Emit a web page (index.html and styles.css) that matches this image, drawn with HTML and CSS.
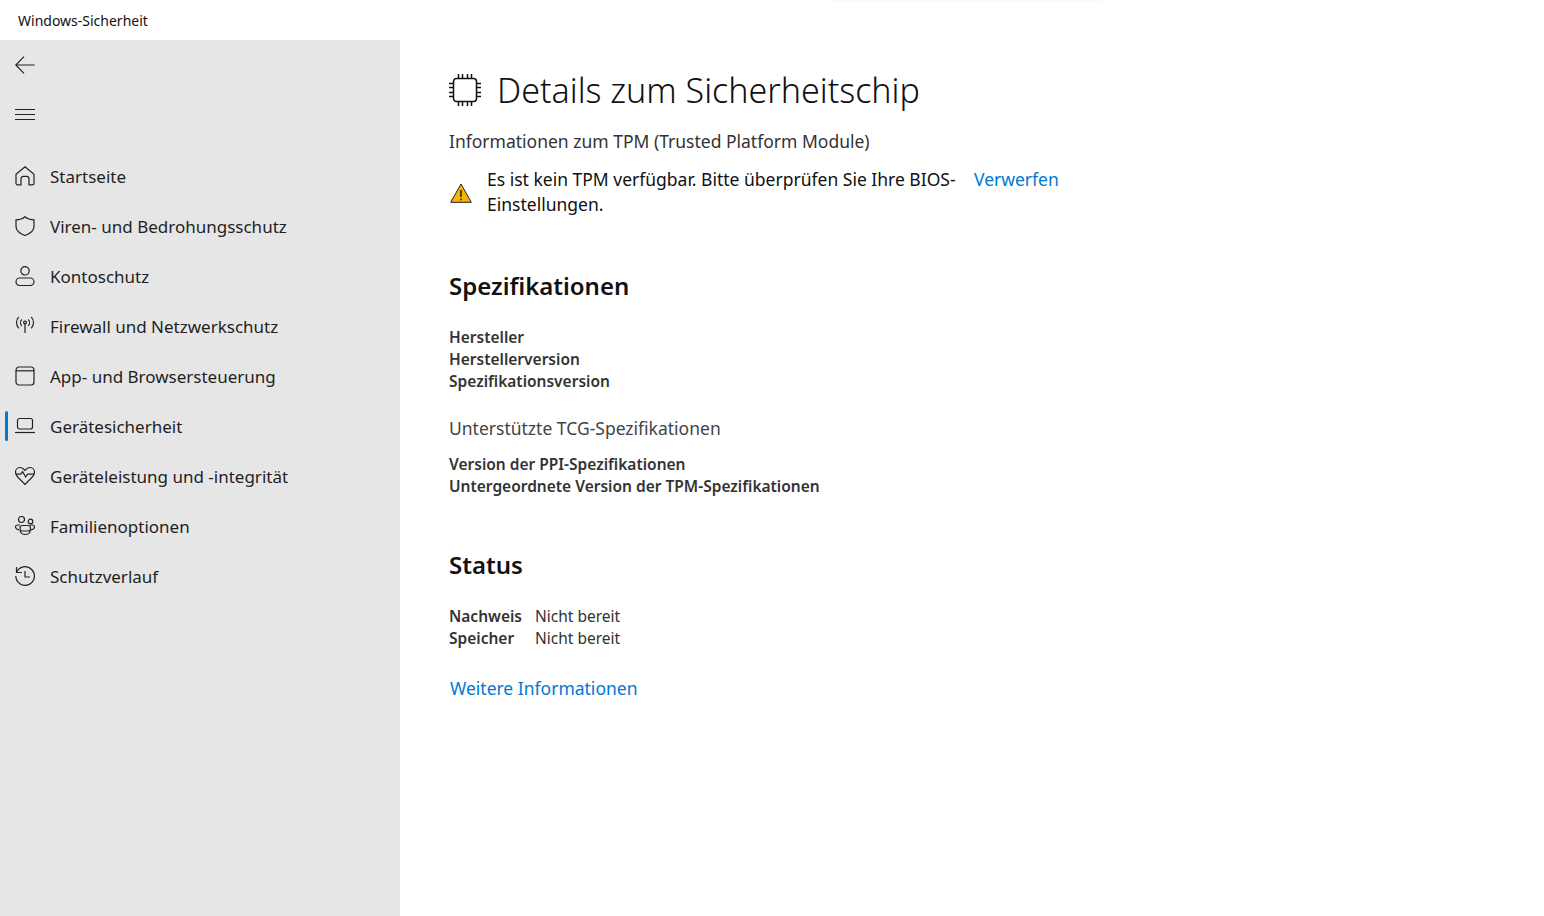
FILE: index.html
```html
<!DOCTYPE html>
<html lang="de">
<head>
<meta charset="utf-8">
<title>Windows-Sicherheit</title>
<link rel="stylesheet" href="styles.css">
</head>
<body>
<header class="titlebar"><span class="app-title">Windows-Sicherheit</span><div class="top-shadow"></div></header>
<div class="app">
  <aside class="sidebar">
    <div class="tool"><svg class="icon" viewBox="0 0 20 20"><path d="M19.5 10H.8M9 1.7.8 10 9 18.3"/></svg></div>
    <div class="tool"><svg class="icon" viewBox="0 0 20 20"><path d="M0 4.5h20M0 9.5h20M0 14.5h20"/></svg></div>
    <nav class="nav">
      <a class="nav-item"><svg class="icon" viewBox="0 0 20 20"><path d="M1 8.2 10 .8l9 7.4v9a1.6 1.6 0 0 1-1.6 1.6H14v-6a2.5 2.5 0 0 0-2.5-2.5h-3A2.5 2.5 0 0 0 6 12.800v6H2.600A1.600 1.600 0 0 1 1 17.200z"/></svg><span>Startseite</span></a>
      <a class="nav-item"><svg class="icon" viewBox="0 0 20 20"><path d="M10 .8c2.300 2 5.300 3 9 3v6.500c0 4-3 7.200-9 9.200-6-2-9-5.200-9-9.200V3.800c3.700 0 6.700-1 9-3z"/></svg><span>Viren- und Bedrohungsschutz</span></a>
      <a class="nav-item"><svg class="icon" viewBox="0 0 20 20"><circle cx="10" cy="4.800" r="4.200"/><rect x="1" y="12" width="18" height="7.500" rx="3.700"/></svg><span>Kontoschutz</span></a>
      <a class="nav-item"><svg class="icon" viewBox="0 0 20 20"><circle cx="10" cy="6.500" r="1.400"/><path d="M10 8v9M6.800 3.500a4.500 4.500 0 0 0 0 6.300M13.200 3.500a4.500 4.500 0 0 1 0 6.300M3.800 .8a8.300 8.300 0 0 0 0 11.500M16.200 .8a8.300 8.300 0 0 1 0 11.500"/></svg><span>Firewall und Netzwerkschutz</span></a>
      <a class="nav-item"><svg class="icon" viewBox="0 0 20 20"><rect x="1" y="1" width="18" height="18" rx="3"/><path d="M1 4.800h18"/></svg><span>App- und Browsersteuerung</span></a>
      <a class="nav-item active"><svg class="icon" viewBox="0 0 20 20"><rect x="2.500" y="2.500" width="15" height="10.500" rx="2"/><path d="M0 16.500h20"/></svg><span>Gerätesicherheit</span></a>
      <a class="nav-item"><svg class="icon" viewBox="0 0 20 20"><path d="M3.200 11.500C1.500 9.800.5 8.500.5 6.300.500 3.400 2.700 1.500 5 1.500c2 0 3.700 1 5 2.800 1.300-1.800 3-2.800 5-2.800 2.300 0 4.500 1.900 4.500 4.800 0 2.200-1 3.500-2.700 5.200L10 18.500z"/><path d="M.8 8.200h5l1.800-2.500 3 5.300 2-2.800h6.600"/></svg><span>Geräteleistung und -integrität</span></a>
      <a class="nav-item"><svg class="icon" viewBox="0 0 20 20"><circle cx="6.500" cy="3.500" r="3"/><circle cx="15.500" cy="5.500" r="2.300"/><path d="M5 9H2.500a2 2 0 0 0-2 2c0 1.500 1.300 2.500 3.500 2.800M15 9h2.500a2 2 0 0 1 2 2c0 1.500-1.300 2.500-3.500 2.800"/><rect x="5" y="9.500" width="10.500" height="5.500" rx="2.500"/><path d="M5 14.500c.5 2.500 2.500 4 5.200 4s4.800-1.500 5.300-4"/></svg><span>Familienoptionen</span></a>
      <a class="nav-item"><svg class="icon" viewBox="0 0 20 20"><path d="M1.500 6.500A9.300 9.300 0 1 1 .8 10M1.500 1v5.500H7M10 5v6h5"/></svg><span>Schutzverlauf</span></a>
    </nav>
  </aside>
  <main class="content">
    <div class="page-head">
      <svg class="chip" viewBox="0 0 32 32"><rect x="4.500" y="4.500" width="23" height="23" rx="3"/><path d="M9.500 0v4M13.500 0v4M18.500 0v4M22.500 0v4M9.500 28v4M13.500 28v4M18.500 28v4M22.500 28v4M0 9.500h4M0 13.500h4M0 18.500h4M0 22.500h4M28 9.500h4M28 13.500h4M28 18.500h4M28 22.500h4"/></svg>
      <h1>Details zum Sicherheitschip</h1>
    </div>
    <p class="subtitle">Informationen zum TPM (Trusted Platform Module)</p>
    <div class="alert">
      <svg class="warn" viewBox="0 0 22 20"><path class="warn-fill" d="M11 1 21.300 19.300H.7z"/><path class="warn-mark" d="M11 7v7M11 15.500v1.800"/></svg>
      <p class="alert-text">Es ist kein TPM verfügbar. Bitte überprüfen Sie Ihre BIOS-Einstellungen.</p>
      <a class="link dismiss">Verwerfen</a>
    </div>
    <h2 class="spec-head">Spezifikationen</h2>
    <ul class="labels"><li>Hersteller</li><li>Herstellerversion</li><li>Spezifikationsversion</li></ul>
    <p class="subhead">Unterstützte TCG-Spezifikationen</p>
    <ul class="labels"><li>Version der PPI-Spezifikationen</li><li>Untergeordnete Version der TPM-Spezifikationen</li></ul>
    <h2 class="status-head">Status</h2>
    <dl class="status">
      <dt>Nachweis</dt><dd>Nicht bereit</dd>
      <dt>Speicher</dt><dd>Nicht bereit</dd>
    </dl>
    <a class="link more">Weitere Informationen</a>
  </main>
</div>
</body>
</html>
```
FILE: styles.css
```css
* { box-sizing: border-box; }
html, body { margin: 0; height: 100%; overflow: hidden; }
body {
  background: #fff;
  color: #1a1a1a;
  font-family: "Noto Sans", "Open Sans", sans-serif;
  font-size: 17px;
}
.titlebar { position: relative; height: 40px; display: flex; align-items: center; padding-left: 18px; }
.app-title { font-size: 14px; color: #111; }
.top-shadow {
  position: absolute; top: 0; left: 830px; width: 272px; height: 4px;
  background: linear-gradient(#f8f8f8, #fff);
}
.app { display: flex; height: 876px; }
.sidebar { width: 400px; flex: none; background: #e6e6e6; }
.tool { height: 50px; padding-left: 15px; display: flex; align-items: center; }
.icon { width: 20px; height: 20px; flex: none; fill: none; stroke: #222; stroke-width: 1.200; }
.nav { margin-top: 11px; display: flex; flex-direction: column; }
.nav-item { position: relative; height: 50px; padding-left: 15px; display: flex; align-items: center; gap: 15px; color: #1f1f1f; }
.active::before {
  content: ""; position: absolute; left: 5px; top: 10px; width: 3px; height: 30px;
  border-radius: 2px; background: #0078d4;
}
.content { flex: 1; padding: 29px 0 0 49px; }
.page-head { display: flex; align-items: center; height: 42px; gap: 16px; }
.chip { width: 32px; height: 32px; flex: none; fill: none; stroke: #111; stroke-width: 1.500; }
h1 { margin: 0; font-size: 34px; font-weight: 300; color: #111; }
.subtitle { margin: 18px 0 0; font-size: 17.500px; line-height: 24px; color: #333; }
.alert { margin-top: 14px; display: flex; align-items: flex-start; }
.warn { width: 22px; height: 20px; margin: 16px 15px 0 1px; flex: none; }
.warn-fill { fill: #f7b500; stroke: #222; stroke-width: 1; }
.warn-mark { fill: none; stroke: #222; stroke-width: 1.500; }
.alert-text { margin: 0; width: 472px; font-size: 17.500px; line-height: 25px; color: #111; }
.link { color: #0078d4; font-size: 17.500px; }
.dismiss { margin-left: 15px; line-height: 25px; }
h2 { margin: 0; font-size: 24px; font-weight: 600; color: #111; line-height: 32px; }
.spec-head { margin-top: 53px; }
.labels { list-style: none; margin: 0; padding: 0; font-size: 15.500px; font-weight: 600; line-height: 22px; color: #333; }
.spec-head + .labels { margin-top: 24px; }
.subhead { margin: 24px 0 0; font-size: 17.500px; line-height: 24px; color: #444; }
.subhead + .labels { margin-top: 13px; }
.status-head { margin-top: 52px; }
.status { margin: 24px 0 0; display: grid; grid-template-columns: 86px auto; justify-content: start; font-size: 15.500px; line-height: 22px; color: #333; }
.status dt { font-weight: 600; }
.status dd { margin: 0; }
.more { display: block; margin-top: 27px; line-height: 24px; padding-left: 1px; }
```
